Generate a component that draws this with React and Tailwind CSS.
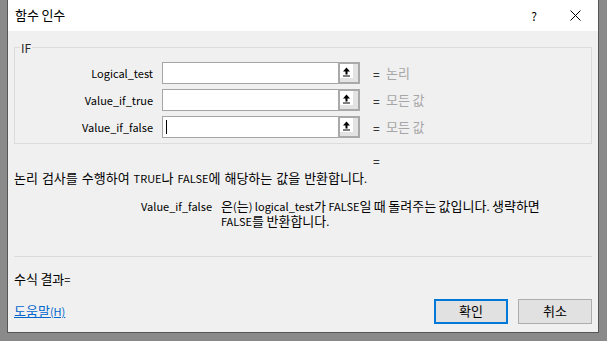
import React from "react";

const font = { fontFamily: '"Noto Sans CJK KR", "Noto Sans", sans-serif' };

// Malgun Gothic draws Hangul larger than its Latin, so Hangul runs get a bigger size
const K = ({ text }) => (
  <>
    {text.split(/([\uac00-\ud7a3]+)/).map((part, i) =>
      i % 2 === 1 ? (
        <span key={i} className="text-[13px] leading-[13px]">
          {part}
        </span>
      ) : (
        <React.Fragment key={i}>{part}</React.Fragment>
      )
    )}
  </>
);

const RefButton = () => (
  <div className="w-[22px] h-[22px] border-2 border-[#a9a9a9] bg-[#e3e3e3] shrink-0">
    <div className="w-[13px] h-[14px] bg-white">
      <svg width="13" height="14" viewBox="0 0 13 14">
        <path d="M6.5 3.5 L10 7.5 L3 7.5 Z" fill="#000" />
        <rect x="5.5" y="7" width="2" height="3.5" fill="#000" />
        <rect x="3" y="11.5" width="7" height="1" fill="#000" />
      </svg>
    </div>
  </div>
);

const ArgRow = ({ label, hint, caret }) => (
  <div className="flex items-center h-[22px]">
    <div className="w-[138px] h-[15px] text-right text-black">{label}</div>
    <div className="ml-[9px] w-[176px] h-[22px] bg-white border border-r-0 border-[#a5a5a5] flex items-center">
      {caret && <div className="ml-[3px] w-px h-[14px] bg-black"></div>}
    </div>
    <RefButton />
    <div className="ml-[13px] w-[13px] h-[15px] text-[12px] text-black">=</div>
    <div className="h-[15px] text-[#a6a6a6] whitespace-nowrap">
      <K text={hint} />
    </div>
  </div>
);

export default function App() {
  return (
    <div
      className="w-[607px] h-[341px] bg-[#8a8a8a] pl-[7px] pr-[8px] pb-[8px] text-[11px] leading-[15px]"
      style={font}
    >
      <div className="w-[592px] h-[333px] bg-[#f0f0f0] border-x border-b border-[#565656] flex flex-col">
        <div className="h-[31px] bg-white flex items-center pl-[7px] shrink-0">
          <span className="text-black h-[15px]">
            <K text="함수 인수" />
          </span>
          <span className="ml-auto text-[12px] text-black h-[15px] mr-[33px]">?</span>
          <svg width="11" height="11" viewBox="0 0 11 11" className="mr-[17px]">
            <path d="M0.5 0.5 L10.5 10.5 M10.5 0.5 L0.5 10.5" stroke="#000" strokeWidth="1" />
          </svg>
        </div>

        <div className="flex flex-col px-[6px]">
          <div className="relative mt-[16px] border border-[#dcdcdc] pt-[14px] pb-[5px] flex flex-col gap-[5px]">
            <span className="absolute left-[5px] top-[-8px] px-[1px] bg-[#f0f0f0] text-[12px] text-[#2a2a2a]">
              IF
            </span>
            <ArgRow label="Logical_test" hint="논리" />
            <ArgRow label="Value_if_true" hint="모든 값" />
            <ArgRow label="Value_if_false" hint="모든 값" caret />
          </div>

          <div className="mt-[9px] h-[15px] pl-[359px] text-[12px] text-black">=</div>
          <div className="mt-[3px] h-[15px] text-black whitespace-nowrap [word-spacing:1.5px]">
            <K text="논리 검사를 수행하여 TRUE나 FALSE에 해당하는 값을 반환합니다." />
          </div>

          <div className="mt-[13px] flex text-black">
            <div className="w-[198px] h-[15px] text-right shrink-0">Value_if_false</div>
            <div className="ml-[9px] flex flex-col whitespace-nowrap">
              <div className="h-[15px]">
                <K text="은(는) logical_test가 FALSE일 때 돌려주는 값입니다. 생략하면" />
              </div>
              <div className="h-[15px]">
                <K text="FALSE를 반환합니다." />
              </div>
            </div>
          </div>

          <div className="mt-[27px] h-px bg-[#dadada]"></div>

          <div className="mt-[15px] h-[15px] text-black">
            <K text="수식 결과" />=
          </div>

          <div className="mt-[12px] flex items-center">
            <span className="text-[#0066cc] underline h-[15px]">
              <K text="도움말" />(H)
            </span>
            <button className="ml-auto w-[74px] h-[25px] border-2 border-[#0078d7] bg-[#e1e1e1] text-black">
              <K text="확인" />
            </button>
            <button className="ml-[10px] w-[74px] h-[25px] border border-[#adadad] bg-[#e1e1e1] text-black">
              <K text="취소" />
            </button>
          </div>
        </div>
      </div>
    </div>
  );
}
